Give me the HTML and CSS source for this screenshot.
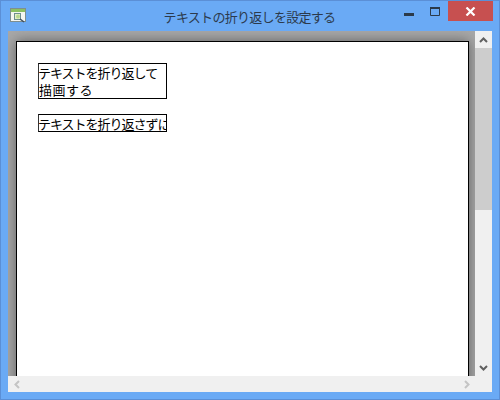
FILE: index.html
```html
<!DOCTYPE html>
<html lang="ja">

<head>
    <meta charset="UTF-8">
    <title>テキストの折り返しを設定する</title>
    <link rel="stylesheet" href="styles.css">
</head>

<body>
    <div class="window">
        <div class="titlebar">
            <svg class="app-icon" width="16" height="15" viewBox="0 0 16 15">
                <rect x="0.5" y="0.5" width="15" height="13" fill="#f4f6f2" stroke="#7f8f8f"/>
                <rect x="1" y="1" width="14" height="3" fill="#8cc063"/>
                <rect x="4.5" y="5.5" width="6" height="6" fill="#e4efc8" stroke="#6f8f8f"/>
                <circle cx="8" cy="8.5" r="2" fill="#b8d890"/>
                <path d="M10 11l4 3" stroke="#405060" stroke-width="1.5"/>
            </svg>
            <div class="title">テキストの折り返しを設定する</div>
            <div class="controls">
                <div class="ctl">
                    <svg width="10" height="3" viewBox="0 0 10 3"><rect width="10" height="3" y="0" fill="#2b3a4a"/></svg>
                </div>
                <div class="ctl ctl-max">
                    <svg width="10" height="9" viewBox="0 0 10 9"><path d="M0.5 0.5h9v8h-9z" fill="none" stroke="#2b3a4a"/><rect width="10" height="2" fill="#2b3a4a"/></svg>
                </div>
                <div class="ctl-close">
                    <svg width="11" height="9" viewBox="0 0 11 9"><path d="M1.5 0.5l8 8M9.5 0.5l-8 8" stroke="#fff" stroke-width="2.2"/></svg>
                </div>
            </div>
        </div>

        <div class="client">
            <div class="viewport">
                <div class="page">
                    <div class="textbox textbox-wrap">テキストを折り返して<span class="wide">描画する</span></div>
                    <div class="textbox textbox-nowrap">テキストを折り返さずに描画する</div>
                </div>
            </div>

            <div class="vscroll">
                <div class="arrow">
                    <svg width="9" height="6" viewBox="0 0 9 6"><path d="M1 5l3.5-3.5L8 5" fill="none" stroke="#606060" stroke-width="2"/></svg>
                </div>
                <div class="thumb"></div>
                <div class="arrow arrow-end">
                    <svg width="9" height="6" viewBox="0 0 9 6"><path d="M1 1l3.5 3.5L8 1" fill="none" stroke="#606060" stroke-width="2"/></svg>
                </div>
            </div>

            <div class="hscroll">
                <svg width="6" height="9" viewBox="0 0 6 9"><path d="M5 1L1.5 4.5 5 8" fill="none" stroke="#c4c4c4" stroke-width="2"/></svg>
                <svg width="6" height="9" viewBox="0 0 6 9"><path d="M1 1l3.5 3.5L1 8" fill="none" stroke="#c4c4c4" stroke-width="2"/></svg>
            </div>
            <div class="corner"></div>
        </div>
    </div>
</body>

</html>
```

FILE: styles.css
```css
html, body {
    margin: 0;
    padding: 0;
}

body {
    width: 500px;
    height: 400px;
    overflow: hidden;
    font-family: "Noto Sans CJK JP", sans-serif;
}

.window {
    box-sizing: border-box;
    width: 500px;
    height: 400px;
    display: flex;
    flex-direction: column;
    background-color: #6aaaf5;
    border: 1px solid #5b8fd6;
    padding: 0 7px 7px;
}

/* Title bar */
.titlebar {
    height: 30px;
    flex: none;
    display: grid;
    grid-template-columns: 1fr auto 1fr;
    align-items: start;
}

.app-icon {
    display: block;
    margin: 7px 0 0 2px;
}

.title {
    font-size: 13px;
    letter-spacing: -0.7px;
    line-height: 18px;
    margin: 7px 1px 0 0;
    color: #2c3a4c;
}

.controls {
    display: flex;
    justify-content: flex-end;
    margin-right: -1px;
}

.ctl {
    width: 26px;
    height: 20px;
    display: flex;
    justify-content: center;
    align-items: flex-end;
    padding-bottom: 5px;
    box-sizing: border-box;
}

.ctl-max {
    align-items: center;
    padding: 0;
}

.ctl-close {
    width: 45px;
    height: 20px;
    background-color: #c75050;
    display: flex;
    justify-content: center;
    align-items: center;
}

/* Client area */
.client {
    flex: 1;
    min-height: 0;
    display: grid;
    grid-template-columns: 1fr 17px;
    grid-template-rows: 1fr 16px;
}

.viewport {
    overflow: hidden;
    background-color: #a8a8a8;
    padding: 10px 6px 0 8px;
}

.page {
    box-sizing: border-box;
    height: 500px;
    background-color: #fff;
    border: 1px solid #000;
    padding: 21px 20px 21px 21px;
    box-shadow: 0 0 12px #606060;
}

.textbox {
    box-sizing: border-box;
    width: 129px;
    border: 1px solid #000;
    border-left-color: #333;
    background-color: #fff;
    font-size: 13px;
    letter-spacing: -1px;
    text-indent: -1px;
    color: #000;
    overflow: hidden;
}

.textbox-wrap {
    height: 36px;
    line-height: 17px;
    margin-bottom: 15px;
}

.wide {
    letter-spacing: 0.5px;
}

.textbox-nowrap {
    height: 18px;
    line-height: 17px;
    white-space: nowrap;
}

/* Scrollbars */
.vscroll {
    display: flex;
    flex-direction: column;
    background-color: #f0f0f0;
}

.arrow {
    height: 17px;
    flex: none;
    display: flex;
    justify-content: center;
    align-items: center;
}

.arrow-end {
    margin-top: auto;
}

.thumb {
    height: 162px;
    background-color: #cdcdcd;
}

.hscroll {
    display: flex;
    justify-content: space-between;
    align-items: center;
    padding: 0 5px 0 6px;
    background-color: #f0f0f0;
}

.corner {
    background-color: #f0f0f0;
}
```
